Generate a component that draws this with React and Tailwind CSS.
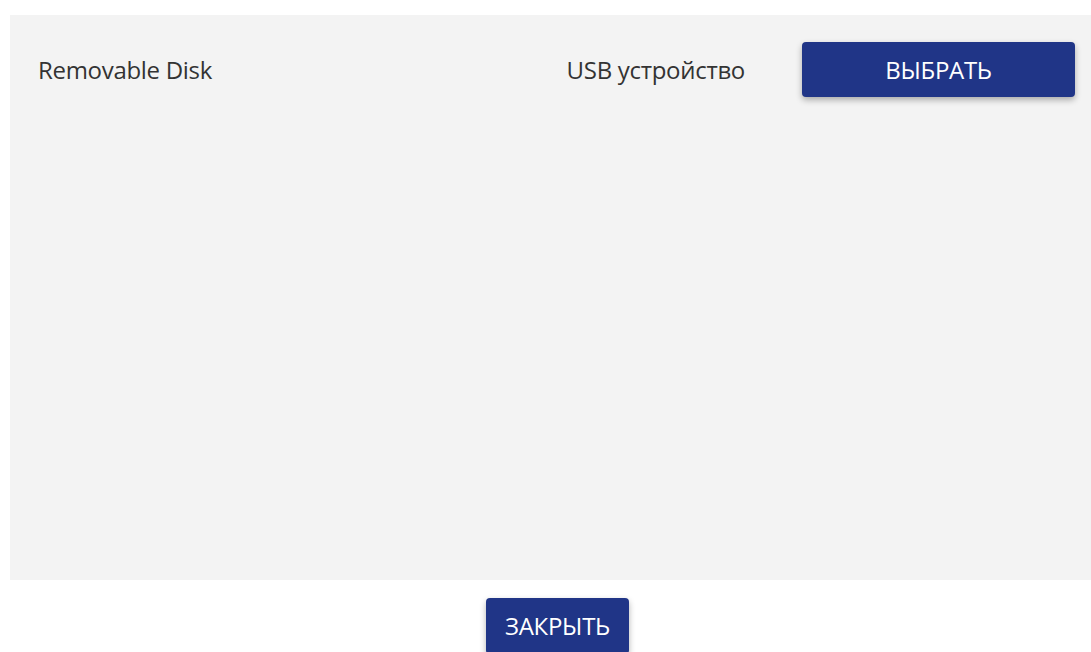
import React from "react";

const DeviceRow = ({ name, type, onSelect }) => (
  <div className="flex items-center h-[55px] pl-[28px] pr-[16px]">
    <span className="flex-1 text-[24px] tracking-[-0.3px] text-[#333333]">{name}</span>
    <span className="text-[24px] tracking-[-0.3px] text-[#333333] mr-[57px]">{type}</span>
    <button
      onClick={onSelect}
      className="w-[273px] h-[55px] rounded-[4px] bg-[#203587] text-white text-[24px] tracking-[-0.3px] shadow-[0_3px_6px_rgba(0,0,0,0.3)]"
    >
      ВЫБРАТЬ
    </button>
  </div>
);

export default function App() {
  const devices = [{ id: 1, name: "Removable Disk", type: "USB устройство" }];

  return (
    <div
      className="w-[1091px] h-[652px] overflow-hidden bg-white pt-[15px] pl-[10px]"
      style={{ fontFamily: '"Open Sans", "Noto Sans", sans-serif' }}
    >
      {/* список устройств */}
      <div className="h-[565px] bg-[#f3f3f3] pt-[27px]">
        {devices.map((d) => (
          <DeviceRow key={d.id} name={d.name} type={d.type} />
        ))}
      </div>

      <div className="flex justify-center pl-[14px] pt-[18px]">
        <button className="w-[143px] h-[56px] rounded-[4px] bg-[#203587] text-white text-[24px] tracking-[-0.3px] shadow-[0_3px_6px_rgba(0,0,0,0.3)]">
          ЗАКРЫТЬ
        </button>
      </div>
    </div>
  );
}
